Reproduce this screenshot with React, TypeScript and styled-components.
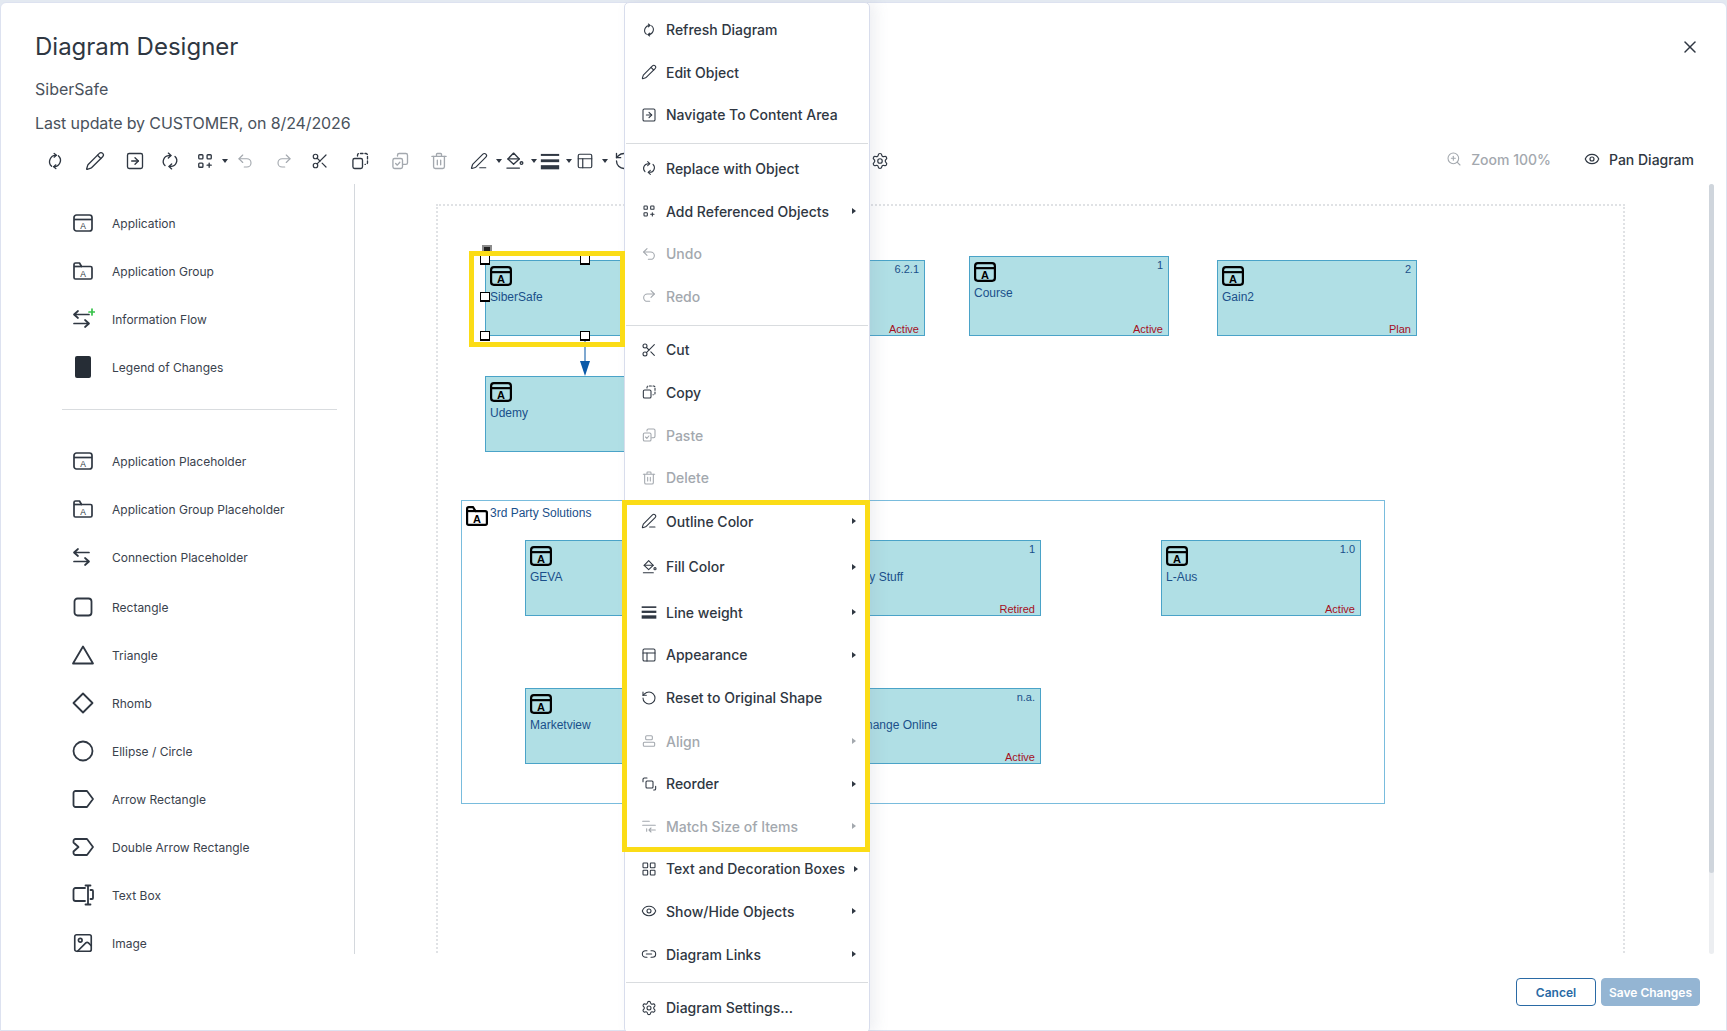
import React from 'react';
import styled, { createGlobalStyle } from 'styled-components';
import {
  Eye,
  Image as ImageIcon,
  LayoutGrid,
  Link2,
  PanelsTopLeft,
  PenLine,
  Pencil,
  RotateCcw,
  Scissors,
  Settings,
  SquareArrowRight,
  Undo2,
  Redo2,
  X,
  ZoomIn,
} from 'lucide-react';

const CANVAS_X = 355;
const CANVAS_Y = 184;
const FONT = '"Inter", "Noto Sans", sans-serif';

const GlobalStyle = createGlobalStyle`
  * { box-sizing: border-box; }
  html, body {
    margin: 0;
    height: 100%;
    overflow: hidden;
    background: #e3e9f1;
    font-family: ${FONT};
  }
`;

// Page shell
const Page = styled.div`
  position: relative;
  width: 1727px;
  height: 1031px;
  overflow: hidden;
  padding-top: 2px;
`;

const Modal = styled.div`
  height: 1029px;
  background: #fff;
  border: 1px solid #dde2f0;
  border-radius: 6px 6px 0 0;
  display: flex;
  flex-direction: column;
  color: #2f3742;
`;

// Header
const Header = styled.div`
  padding: 29px 26px 0 34px;
`;

const TitleRow = styled.div`
  display: flex;
  justify-content: space-between;
  align-items: center;
`;

const Title = styled.h1`
  margin: 0;
  font-size: 24px;
  line-height: 30px;
  font-weight: 400;
  color: #2f3742;
`;

const CloseButton = styled.div`
  display: flex;
  color: #2f3742;
`;

const SubTitle = styled.div`
  margin-top: 16px;
  font-size: 16px;
  line-height: 22px;
  color: #4a525c;
`;

const UpdateLine = styled(SubTitle)`
  margin-top: 12px;
  letter-spacing: -0.12px;
`;

// Toolbar
const Toolbar = styled.div`
  display: flex;
  align-items: center;
  height: 24px;
  margin-top: 15px;
  padding: 0 32px 0 44px;
`;

const ToolIcon = styled.span<{ $gap: number; $off?: boolean }>`
  display: flex;
  width: 20px;
  height: 20px;
  align-items: center;
  justify-content: center;
  flex: none;
  margin-left: ${p => p.$gap}px;
  color: ${p => (p.$off ? '#a3a8ae' : '#2f3742')};
`;

const Caret = styled.span<{ $gap: number }>`
  flex: none;
  width: 0;
  height: 0;
  margin: 0 2px 0 ${p => p.$gap}px;
  border-left: 3px solid transparent;
  border-right: 3px solid transparent;
  border-top: 4px solid #2f3742;
`;

const ToolbarRight = styled.div`
  margin-left: auto;
  margin-bottom: 4px;
  display: flex;
  align-items: center;
`;

const ZoomLabel = styled.span<{ $off?: boolean }>`
  display: flex;
  align-items: center;
  gap: 9px;
  margin-left: 33px;
  font-size: 14px;
  font-weight: 500;
  color: ${p => (p.$off ? '#a3a8ae' : '#2f3742')};
`;

// Body
const Body = styled.div`
  display: flex;
  height: 770px;
  margin: 11px 12px 0 0;
  overflow: hidden;
`;

const Sidebar = styled.div`
  flex: none;
  width: 354px;
  border-right: 1px solid #d4d8dd;
  padding-top: 15px;
  overflow: hidden;
`;

const PaletteRow = styled.div<{ $offset?: number }>`
  display: flex;
  align-items: center;
  gap: 19px;
  height: 48px;
  padding-left: 72px;
  margin-top: ${p => p.$offset ?? 0}px;
  font-size: 12px;
  color: #3a424d;
`;

const PaletteIcon = styled.span`
  display: flex;
  width: 20px;
  height: 20px;
  align-items: center;
  justify-content: center;
  flex: none;
  color: #2f3742;

  svg {
    flex: none;
  }
`;

const PaletteDivider = styled.div`
  height: 1px;
  margin: 18px 17px 27px 61px;
  background: #d9dcdf;
`;

const Canvas = styled.div`
  position: relative;
  flex: 1;
  overflow: hidden;
`;

const ScrollTrack = styled.div`
  flex: none;
  width: 5px;
  background: #eceef1;
  border-radius: 3px;
`;

const ScrollThumb = styled.div`
  height: 689px;
  background: #cfd5dc;
  border-radius: 3px;
`;

// Canvas items
const PageArea = styled.div`
  position: absolute;
  left: ${436 - CANVAS_X}px;
  top: ${204 - CANVAS_Y}px;
  width: ${1625 - 436}px;
  height: 900px;
  border: 2px dotted #e0e2e5;
`;

const GroupBox = styled.div<{ $x: number; $y: number; $w: number; $h: number }>`
  position: absolute;
  left: ${p => p.$x - CANVAS_X}px;
  top: ${p => p.$y - CANVAS_Y}px;
  width: ${p => p.$w}px;
  height: ${p => p.$h}px;
  border: 1.5px solid #79bcdd;
  display: flex;
  align-items: flex-start;
  padding: 5px 0 0 4px;
  gap: 2px;
  font-family: "Liberation Sans", sans-serif;
  font-size: 12px;
  line-height: 14px;
  color: #1a4f8a;

  svg {
    flex: none;
    display: block;
  }
`;

const NodeBox = styled.div<{ $x: number; $y: number; $h: number }>`
  position: absolute;
  left: ${p => p.$x - CANVAS_X}px;
  top: ${p => p.$y - CANVAS_Y}px;
  width: 200px;
  height: ${p => p.$h}px;
  background: #b0dfe5;
  border: 1.5px solid #4aa3c8;
  padding: 5px 4px;
  font-family: "Liberation Sans", sans-serif;
  font-size: 12px;
  line-height: 14px;
  color: #1a4f8a;

  svg {
    display: block;
  }
`;

const NodeLabel = styled.div`
  margin-top: 4px;
`;

const NodeVersion = styled.span`
  position: absolute;
  top: 1px;
  right: 5px;
  font-size: 11px;
`;

const NodeStatus = styled.span`
  position: absolute;
  bottom: -1px;
  right: 5px;
  font-size: 11px;
  color: #a5101e;
`;

const Handle = styled.span<{ $x: number; $y: number }>`
  position: absolute;
  left: ${p => p.$x - CANVAS_X - 5}px;
  top: ${p => p.$y - CANVAS_Y - 5}px;
  width: 10px;
  height: 10px;
  background: #fff;
  border: 1.5px solid #000;
  border-bottom-width: 2.5px;
`;

const RotateHandle = styled.span`
  position: absolute;
  left: ${482 - CANVAS_X}px;
  top: ${245 - CANVAS_Y}px;
  width: 10px;
  height: 11px;
  background: #222;
  border: 2.5px solid #8c8c8c;
`;

const Connector = styled.svg`
  position: absolute;
  left: ${577 - CANVAS_X}px;
  top: ${336 - CANVAS_Y}px;
`;

const Highlight = styled.div<{ $x: number; $y: number; $w: number; $h: number; $inCanvas?: boolean }>`
  position: absolute;
  left: ${p => p.$x - (p.$inCanvas ? CANVAS_X : 0)}px;
  top: ${p => p.$y - (p.$inCanvas ? CANVAS_Y : 0)}px;
  width: ${p => p.$w}px;
  height: ${p => p.$h}px;
  border: 5px solid #fbdc16;
  z-index: 3;
`;

// Footer
const Footer = styled.div`
  display: flex;
  justify-content: flex-end;
  gap: 5px;
  margin-top: 24px;
  padding-right: 26px;
`;

const FooterButton = styled.button<{ $primary?: boolean }>`
  height: 28px;
  width: ${p => (p.$primary ? 99 : 80)}px;
  padding: 0;
  border-radius: 4px;
  border: 1.5px solid ${p => (p.$primary ? '#94b5d3' : '#2a6aa5')};
  background: ${p => (p.$primary ? '#94b5d3' : '#fff')};
  color: ${p => (p.$primary ? '#fff' : '#2a6aa5')};
  font-family: ${FONT};
  font-size: 12px;
  font-weight: 600;
`;

// Context menu
const Menu = styled.div`
  position: absolute;
  left: 624px;
  top: 2px;
  width: 246px;
  padding: 5.4px 0 3px;
  background: #fff;
  border: 1px solid #d8ddec;
  border-radius: 5px;
  box-shadow: 6px 0 14px rgba(120, 130, 160, 0.12);
  z-index: 2;
`;

const MenuRow = styled.div<{ $h?: number; $off?: boolean }>`
  display: flex;
  align-items: center;
  gap: 9px;
  height: ${p => p.$h ?? 42.6}px;
  padding: 0 13px 0 16px;
  font-size: 14px;
  font-weight: 500;
  white-space: nowrap;
  color: ${p => (p.$off ? '#a3a8ae' : '#2f3742')};
`;

const MenuIcon = styled.span`
  display: flex;
  width: 16px;
  height: 16px;
  align-items: center;
  justify-content: center;
  flex: none;
`;

const SubArrow = styled.span`
  margin-left: auto;
  width: 0;
  height: 0;
  border-top: 3px solid transparent;
  border-bottom: 3px solid transparent;
  border-left: 4px solid currentColor;
`;

const MenuDivider = styled.div`
  height: 1px;
  margin: 7px 1px 3px;
  background: #d9dcdf;
`;

// Icons
type IconProps = { size?: number };

const Svg: React.FC<IconProps & { children: React.ReactNode }> = ({ size = 20, children }) => (
  <svg width={size} height={size} viewBox="0 0 24 24" fill="none" stroke="currentColor" strokeWidth="1.6" strokeLinecap="round" strokeLinejoin="round">
    {children}
  </svg>
);

const RefreshIcon: React.FC<IconProps> = ({ size }) => (
  <Svg size={size}>
    <path d="M13.5 5.2A7.5 7.5 0 0 0 8 18.3" />
    <path d="M11 3l2.6 2.2L11 7.4" />
    <path d="M10.5 18.8A7.5 7.5 0 0 0 16 5.7" />
    <path d="M13 21l-2.6-2.2 2.6-2.2" />
  </Svg>
);

const ReplaceIcon: React.FC<IconProps> = ({ size }) => (
  <Svg size={size}>
    <path d="M13 5.5H11A7 7 0 0 0 6 17.5" />
    <path d="M10 2.5l3.2 3-3.2 3" />
    <path d="M11 18.5h2A7 7 0 0 0 18 6.5" />
    <path d="M14 21.5l-3.2-3 3.2-3" />
  </Svg>
);

const AddRefIcon: React.FC<IconProps> = ({ size }) => (
  <Svg size={size}>
    <rect x="4.5" y="4.5" width="5" height="5" rx="1" />
    <rect x="14.5" y="4.5" width="5" height="5" rx="1" />
    <rect x="4.5" y="14.5" width="5" height="5" rx="1" />
    <path d="M17 14.5v5M14.5 17h5" />
  </Svg>
);

const CopyDashedIcon: React.FC<IconProps> = ({ size }) => (
  <Svg size={size}>
    <rect x="3.5" y="9" width="11.5" height="12" rx="2" />
    <path d="M9 6V5a2 2 0 0 1 2-2h8a2 2 0 0 1 2 2v9a2 2 0 0 1-2 2h-1" strokeDasharray="3 2.4" />
  </Svg>
);

const PasteIcon: React.FC<IconProps> = ({ size }) => (
  <Svg size={size}>
    <rect x="3.5" y="9" width="11.5" height="12" rx="2" />
    <path d="M9 6V5a2 2 0 0 1 2-2h8a2 2 0 0 1 2 2v9a2 2 0 0 1-2 2h-3" />
    <path d="M6.8 15l2 2 3-3.5" />
  </Svg>
);

const TrashIcon: React.FC<IconProps> = ({ size }) => (
  <Svg size={size}>
    <path d="M3.5 6.5h17M9 6.5V4a1 1 0 0 1 1-1h4a1 1 0 0 1 1 1v2.5" />
    <path d="M5.5 6.5V19a2 2 0 0 0 2 2h9a2 2 0 0 0 2-2V6.5" />
    <path d="M10 11v5.5M14 11v5.5" />
  </Svg>
);

const FillIcon: React.FC<IconProps> = ({ size }) => (
  <Svg size={size}>
    <path d="M11.5 2.5l6.8 7-6.8 6.5-6.8-6.5z" />
    <path d="M4.7 9.5h13.6" />
    <path d="M3.5 20.5h15" />
    <circle cx="21" cy="14.5" r="1.6" />
  </Svg>
);

const WeightIcon: React.FC<IconProps> = ({ size }) => (
  <svg width={size ?? 20} height={size ?? 20} viewBox="0 0 24 24" fill="currentColor">
    <rect x="1" y="3.5" width="22" height="2.4" />
    <rect x="1" y="10" width="22" height="3.4" />
    <rect x="1" y="17" width="22" height="5" />
  </svg>
);

const AlignIcon: React.FC<IconProps> = ({ size }) => (
  <Svg size={size}>
    <rect x="7" y="4" width="10" height="6" rx="1.5" />
    <rect x="3.5" y="14" width="17" height="6" rx="1.5" />
  </Svg>
);

const ReorderIcon: React.FC<IconProps> = ({ size }) => (
  <Svg size={size}>
    <rect x="7.5" y="7.5" width="10.5" height="10.5" rx="1.5" />
    <path d="M3 8.5V5a2 2 0 0 1 2-2h4" />
    <path d="M22 15.5V19a2 2 0 0 1-2 2h-1" />
  </Svg>
);

const MatchIcon: React.FC<IconProps> = ({ size }) => (
  <Svg size={size}>
    <path d="M2.5 5h10M2.5 11h19" />
    <path d="M21.5 18h-9M15 15l-3 3 3 3" />
    <path d="M8.5 16v4" />
  </Svg>
);

type GlyphProps = { w?: number; h?: number; weight?: number; color?: string; bold?: boolean };

const AppGlyph: React.FC<GlyphProps> = ({ w = 20, h = 18, weight = 1.7, color = 'currentColor', bold }) => (
  <svg width={w} height={h} viewBox="0 0 20 18" fill="none" stroke={color} strokeWidth={weight}>
    <rect x="1" y="1" width="18" height="16" rx="2.5" />
    <path d="M1 5.5h18" />
    <text x="10" y="15" textAnchor="middle" fontSize={bold ? 10 : 8.5} fontFamily="Liberation Sans, sans-serif" fontWeight={bold ? 700 : 400} fill={color} stroke="none">
      A
    </text>
  </svg>
);

const GroupGlyph: React.FC<GlyphProps> = ({ w = 20, h = 18, weight = 1.7, color = 'currentColor', bold }) => (
  <svg width={w} height={h} viewBox="0 0 20 18" fill="none" stroke={color} strokeWidth={weight} strokeLinejoin="round">
    <path d="M1 15V2.5A1.5 1.5 0 0 1 2.5 1h4L8.5 4.5H17.5A1.5 1.5 0 0 1 19 6v9.5A1.5 1.5 0 0 1 17.5 17h-15A1.5 1.5 0 0 1 1 15.5z" />
    <path d="M1 4.5h8" />
    <text x="10" y="15" textAnchor="middle" fontSize={bold ? 10 : 8.5} fontFamily="Liberation Sans, sans-serif" fontWeight={bold ? 700 : 400} fill={color} stroke="none">
      A
    </text>
  </svg>
);

const FlowGlyph: React.FC<{ plus?: boolean }> = ({ plus }) => (
  <svg width="24" height="22" viewBox="0 0 24 22" fill="none" stroke="currentColor" strokeWidth="1.7" strokeLinecap="round" strokeLinejoin="round">
    <path d="M3 6.5h15M7 3L3 6.5 7 10" />
    <path d="M18 15.5H3M14 12l4 3.5-4 3.5" />
    {plus && <path d="M21 1v6M18 4h6" stroke="#37c24a" />}
  </svg>
);

const ShapeGlyph: React.FC<{ children: React.ReactNode }> = ({ children }) => (
  <svg width="24" height="22" viewBox="0 0 24 22" fill="none" stroke="currentColor" strokeWidth="1.8" strokeLinecap="round" strokeLinejoin="round">
    {children}
  </svg>
);

const LegendGlyph = styled.span`
  display: block;
  flex: none;
  width: 16px;
  height: 22px;
  background: #262d36;
  border-radius: 2px;
`;

// Menu data
type MenuEntry = { icon: React.ReactNode; label: string; sub?: boolean; off?: boolean; h?: number };

const m = 16;

const menuTop: MenuEntry[] = [
  { icon: <RefreshIcon size={m} />, label: 'Refresh Diagram' },
  { icon: <Pencil size={m} strokeWidth={1.6} />, label: 'Edit Object' },
  { icon: <SquareArrowRight size={m} strokeWidth={1.6} />, label: 'Navigate To Content Area' },
];

const menuEdit: MenuEntry[] = [
  { icon: <ReplaceIcon size={m} />, label: 'Replace with Object' },
  { icon: <AddRefIcon size={m} />, label: 'Add Referenced Objects', sub: true },
  { icon: <Undo2 size={m} strokeWidth={1.6} />, label: 'Undo', off: true },
  { icon: <Redo2 size={m} strokeWidth={1.6} />, label: 'Redo', off: true },
];

const menuFormat: MenuEntry[] = [
  { icon: <Scissors size={m} strokeWidth={1.6} />, label: 'Cut' },
  { icon: <CopyDashedIcon size={m} />, label: 'Copy' },
  { icon: <PasteIcon size={m} />, label: 'Paste', off: true },
  { icon: <TrashIcon size={m} />, label: 'Delete', off: true },
  { icon: <PenLine size={m} strokeWidth={1.6} />, label: 'Outline Color', sub: true, h: 44.2 },
  { icon: <FillIcon size={m} />, label: 'Fill Color', sub: true, h: 47.4 },
  { icon: <WeightIcon size={m} />, label: 'Line weight', sub: true, h: 43.6 },
  { icon: <PanelsTopLeft size={m} strokeWidth={1.6} />, label: 'Appearance', sub: true, h: 41.6 },
  { icon: <RotateCcw size={m} strokeWidth={1.6} />, label: 'Reset to Original Shape', h: 44.1 },
  { icon: <AlignIcon size={m} />, label: 'Align', sub: true, off: true },
  { icon: <ReorderIcon size={m} />, label: 'Reorder', sub: true },
  { icon: <MatchIcon size={m} />, label: 'Match Size of Items', sub: true, off: true },
  { icon: <LayoutGrid size={m} strokeWidth={1.6} />, label: 'Text and Decoration Boxes', sub: true },
  { icon: <Eye size={m} strokeWidth={1.6} />, label: 'Show/Hide Objects', sub: true },
  { icon: <Link2 size={m} strokeWidth={1.6} />, label: 'Diagram Links', sub: true },
];

const menuEnd: MenuEntry[] = [{ icon: <Settings size={m} strokeWidth={1.6} />, label: 'Diagram Settings...' }];

const menuGroups = [menuTop, menuEdit, menuFormat, menuEnd];

// Toolbar data
type ToolEntry = { node?: React.ReactNode; gap: number; off?: boolean };

const tools: ToolEntry[] = [
  { node: <RefreshIcon />, gap: 0 },
  { node: <Pencil size={20} strokeWidth={1.6} />, gap: 20 },
  { node: <SquareArrowRight size={20} strokeWidth={1.6} />, gap: 20 },
  { node: <ReplaceIcon />, gap: 15 },
  { node: <AddRefIcon />, gap: 15 },
  { gap: 7 },
  { node: <Undo2 size={18} strokeWidth={1.5} />, gap: 5, off: true },
  { node: <Redo2 size={18} strokeWidth={1.5} />, gap: 19, off: true },
  { node: <Scissors size={18} strokeWidth={1.6} />, gap: 16 },
  { node: <CopyDashedIcon />, gap: 20 },
  { node: <PasteIcon />, gap: 20, off: true },
  { node: <TrashIcon />, gap: 19, off: true },
  { node: <PenLine size={18} strokeWidth={1.6} />, gap: 20 },
  { gap: 7 },
  { node: <FillIcon />, gap: 0 },
  { gap: 7 },
  { node: <WeightIcon />, gap: 1 },
  { gap: 6 },
  { node: <PanelsTopLeft size={18} strokeWidth={1.6} />, gap: 1 },
  { gap: 7 },
  { node: <RotateCcw size={20} strokeWidth={1.6} />, gap: 4 },
  { node: <Settings size={18} strokeWidth={1.6} />, gap: 236 },
];

// Palette data
type PaletteEntry = { icon: React.ReactNode; label: string; offset?: number };

const paletteTop: PaletteEntry[] = [
  { icon: <AppGlyph />, label: 'Application' },
  { icon: <GroupGlyph />, label: 'Application Group' },
  { icon: <FlowGlyph plus />, label: 'Information Flow' },
  { icon: <LegendGlyph />, label: 'Legend of Changes' },
];

const paletteBottom: PaletteEntry[] = [
  { icon: <AppGlyph />, label: 'Application Placeholder' },
  { icon: <GroupGlyph />, label: 'Application Group Placeholder' },
  { icon: <FlowGlyph />, label: 'Connection Placeholder' },
  {
    icon: (
      <ShapeGlyph>
        <rect x="3.5" y="2.5" width="17" height="17" rx="3" />
      </ShapeGlyph>
    ),
    label: 'Rectangle',
    offset: 2,
  },
  {
    icon: (
      <ShapeGlyph>
        <path d="M12 2.5L22 19.5H2z" />
      </ShapeGlyph>
    ),
    label: 'Triangle',
  },
  {
    icon: (
      <ShapeGlyph>
        <path d="M12 1.5l9.5 9.5-9.5 9.5L2.5 11z" />
      </ShapeGlyph>
    ),
    label: 'Rhomb',
  },
  {
    icon: (
      <ShapeGlyph>
        <circle cx="12" cy="11" r="9.5" />
      </ShapeGlyph>
    ),
    label: 'Ellipse / Circle',
  },
  {
    icon: (
      <ShapeGlyph>
        <path d="M4.5 3H16l6 8-6 8H4.5A2 2 0 0 1 2.5 17V5A2 2 0 0 1 4.5 3z" />
      </ShapeGlyph>
    ),
    label: 'Arrow Rectangle',
  },
  {
    icon: (
      <ShapeGlyph>
        <path d="M4.5 3H16l6 8-6 8H4.5A2 2 0 0 1 2.5 17V15.5L7.5 11 2.5 6.5V5A2 2 0 0 1 4.5 3z" />
      </ShapeGlyph>
    ),
    label: 'Double Arrow Rectangle',
  },
  {
    icon: (
      <ShapeGlyph>
        <path d="M14 4H4.5A2 2 0 0 0 2.5 6v9a2 2 0 0 0 2 2H14" />
        <path d="M17 2.5v17M14.5 1.5h5M14.5 20.5h5M19.5 6h1.5a1 1 0 0 1 1 1v7a1 1 0 0 1-1 1h-1.5" />
      </ShapeGlyph>
    ),
    label: 'Text Box',
  },
  { icon: <ImageIcon size={22} strokeWidth={1.8} />, label: 'Image' },
];

// Diagram data
type DiagramNode = { x: number; y: number; h?: number; name?: string; version?: string; status?: string };

const nodes: DiagramNode[] = [
  { x: 485, y: 260, name: 'SiberSafe' },
  { x: 485, y: 376, name: 'Udemy' },
  { x: 725, y: 260, version: '6.2.1', status: 'Active' },
  { x: 969, y: 256, h: 80, name: 'Course', version: '1', status: 'Active' },
  { x: 1217, y: 260, name: 'Gain2', version: '2', status: 'Plan' },
  { x: 525, y: 540, name: 'GEVA' },
  { x: 841, y: 540, name: 'Many Stuff', version: '1', status: 'Retired' },
  { x: 1161, y: 540, name: 'L-Aus', version: '1.0', status: 'Active' },
  { x: 525, y: 688, name: 'Marketview' },
  { x: 841, y: 688, name: 'Exchange Online', version: 'n.a.', status: 'Active' },
];

const handles = [
  [485, 260],
  [585, 260],
  [485, 297],
  [485, 336],
  [585, 336],
];

const App: React.FC = () => {
  return (
    <Page>
      <GlobalStyle />
      <Modal>
        <Header>
          <TitleRow>
            <Title>Diagram Designer</Title>
            <CloseButton>
              <X size={20} strokeWidth={1.8} />
            </CloseButton>
          </TitleRow>
          <SubTitle>SiberSafe</SubTitle>
          <UpdateLine>Last update by CUSTOMER, on 8/24/2026</UpdateLine>
        </Header>

        <Toolbar>
          {tools.map((tool, i) =>
            tool.node ? (
              <ToolIcon key={i} $gap={tool.gap} $off={tool.off}>
                {tool.node}
              </ToolIcon>
            ) : (
              <Caret key={i} $gap={tool.gap} />
            )
          )}
          <ToolbarRight>
            <ZoomLabel $off>
              <ZoomIn size={16} strokeWidth={1.6} />
              Zoom 100%
            </ZoomLabel>
            <ZoomLabel>
              <Eye size={16} strokeWidth={1.8} />
              Pan Diagram
            </ZoomLabel>
          </ToolbarRight>
        </Toolbar>

        <Body>
          <Sidebar>
            {paletteTop.map(item => (
              <PaletteRow key={item.label}>
                <PaletteIcon>{item.icon}</PaletteIcon>
                {item.label}
              </PaletteRow>
            ))}
            <PaletteDivider />
            {paletteBottom.map(item => (
              <PaletteRow key={item.label} $offset={item.offset}>
                <PaletteIcon>{item.icon}</PaletteIcon>
                {item.label}
              </PaletteRow>
            ))}
          </Sidebar>

          <Canvas>
            <PageArea />
            <GroupBox $x={461} $y={500} $w={924} $h={304}>
              <GroupGlyph w={22} h={20} weight={2} color="#000" bold />
              3rd Party Solutions
            </GroupBox>
            {nodes.map(node => (
              <NodeBox key={`${node.x}-${node.y}`} $x={node.x} $y={node.y} $h={node.h ?? 76}>
                <AppGlyph w={22} h={20} weight={2} color="#000" bold />
                <NodeLabel>{node.name}</NodeLabel>
                {node.version && <NodeVersion>{node.version}</NodeVersion>}
                {node.status && <NodeStatus>{node.status}</NodeStatus>}
              </NodeBox>
            ))}
            <Connector width="16" height="40" viewBox="0 0 16 40">
              <path d="M8 0v26" stroke="#7fa8d0" strokeWidth="2" />
              <path d="M3 25h10l-5 15z" fill="#0b5aa8" />
            </Connector>
            <RotateHandle />
            {handles.map(([x, y]) => (
              <Handle key={`${x}-${y}`} $x={x} $y={y} />
            ))}
            <Highlight $inCanvas $x={469} $y={251} $w={156} $h={96} />
          </Canvas>

          <ScrollTrack>
            <ScrollThumb />
          </ScrollTrack>
        </Body>

        <Footer>
          <FooterButton>Cancel</FooterButton>
          <FooterButton $primary>Save Changes</FooterButton>
        </Footer>
      </Modal>

      <Menu>
        {menuGroups.map((group, i) => (
          <React.Fragment key={i}>
            {i > 0 && <MenuDivider />}
            {group.map(entry => (
              <MenuRow key={entry.label} $h={entry.h} $off={entry.off}>
                <MenuIcon>{entry.icon}</MenuIcon>
                {entry.label}
                {entry.sub && <SubArrow />}
              </MenuRow>
            ))}
          </React.Fragment>
        ))}
      </Menu>
      <Highlight $x={622} $y={500} $w={248} $h={352} />
    </Page>
  );
};

export default App;
